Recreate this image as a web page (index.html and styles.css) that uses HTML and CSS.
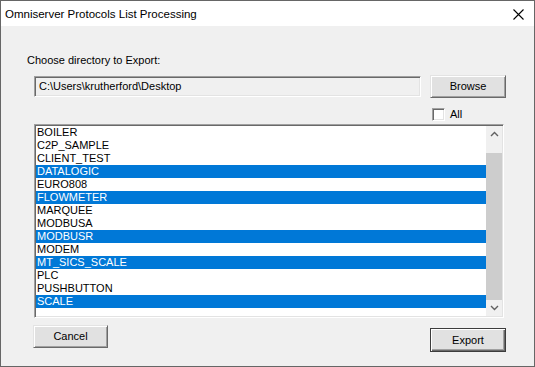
FILE: index.html
```html
<!DOCTYPE html>
<html>
<head>
<meta charset="utf-8">
<link rel="stylesheet" href="styles.css">
</head>
<body>
<div class="window">
  <div class="titlebar">
    <span class="title">Omniserver Protocols List Processing</span>
    <svg class="close" width="11" height="11" viewBox="0 0 11 11"><path d="M0.5 0.5 L10.5 10.5 M10.5 0.5 L0.5 10.5" stroke="#000" stroke-width="1.1" fill="none"/></svg>
  </div>
  <div class="main">
    <div class="label">Choose directory to Export:</div>
    <div class="row1">
      <div class="textbox">C:\Users\krutherford\Desktop</div>
      <div class="btn browse">Browse</div>
    </div>
    <div class="row2">
      <span class="checkbox"></span><span class="chklabel">All</span>
    </div>
    <div class="listbox">
      <div class="items">
        <div class="item">BOILER</div>
        <div class="item">C2P_SAMPLE</div>
        <div class="item">CLIENT_TEST</div>
        <div class="item sel">DATALOGIC</div>
        <div class="item">EURO808</div>
        <div class="item sel">FLOWMETER</div>
        <div class="item">MARQUEE</div>
        <div class="item">MODBUSA</div>
        <div class="item sel">MODBUSR</div>
        <div class="item">MODEM</div>
        <div class="item sel">MT_SICS_SCALE</div>
        <div class="item">PLC</div>
        <div class="item">PUSHBUTTON</div>
        <div class="item sel">SCALE</div>
      </div>
      <div class="scrollbar">
        <div class="arrow"><svg width="9" height="6" viewBox="0 0 9 6"><path d="M1 5 L4.5 1.5 L8 5" stroke="#606060" stroke-width="1.4" fill="none"/></svg></div>
        <div class="track"><div class="thumb"></div></div>
        <div class="arrow"><svg width="9" height="6" viewBox="0 0 9 6"><path d="M1 1 L4.5 4.5 L8 1" stroke="#606060" stroke-width="1.4" fill="none"/></svg></div>
      </div>
    </div>
    <div class="row3">
      <div class="btn cancel">Cancel</div>
      <div class="btn export">Export</div>
    </div>
  </div>
</div>
</body>
</html>
```
FILE: styles.css
```css
html, body {
  margin: 0;
  padding: 0;
  background: #f0f0f0;
}
.window {
  width: 535px;
  height: 367px;
  box-sizing: border-box;
  border: 1px solid #666666;
  background: #f0f0f0;
  font-family: "Liberation Sans", Arial, sans-serif;
  font-size: 11px;
  color: #000;
  overflow: hidden;
}
.titlebar {
  height: 25px;
  background: #ffffff;
  display: flex;
  align-items: center;
  justify-content: space-between;
  padding: 0 10px 0 4px;
}
.title {
  font-size: 11.5px;
  line-height: 16px;
  margin-top: 1px;
}
.close {
  display: block;
  margin-top: 1px;
}
.main {
  padding-left: 33px;
}
.label {
  margin-left: -7px;
  margin-top: 28px;
  height: 13px;
  line-height: 13px;
}
.row1 {
  display: flex;
  align-items: flex-start;
  margin-top: 8px;
}
.textbox {
  margin-top: 1px;
  width: 387px;
  height: 21px;
  box-sizing: border-box;
  border: 1px solid;
  border-color: #a0a0a0 #ffffff #ffffff #a0a0a0;
  box-shadow: inset 1px 1px 0 #696969, inset -1px -1px 0 #e3e3e3;
  padding: 3px 0 0 4px;
  line-height: 13px;
}
.btn {
  box-sizing: border-box;
  height: 23px;
  width: 76px;
  background: #e1e1e1;
  border: 1px solid;
  border-color: #e3e3e3 #696969 #696969 #e3e3e3;
  box-shadow: inset 1px 1px 0 #ffffff, inset -1px -1px 0 #a0a0a0;
  display: flex;
  align-items: center;
  justify-content: center;
  line-height: 13px;
}
.browse {
  margin-left: 9px;
}
.row2 {
  display: flex;
  align-items: center;
  margin-top: 10px;
  margin-left: 398px;
  height: 13px;
}
.checkbox {
  width: 13px;
  height: 13px;
  box-sizing: border-box;
  background: #ffffff;
  border: 1px solid;
  border-color: #a0a0a0 #ffffff #ffffff #a0a0a0;
  box-shadow: inset 1px 1px 0 #696969, inset -1px -1px 0 #e3e3e3;
}
.chklabel {
  margin-left: 5px;
  line-height: 13px;
}
.listbox {
  margin-top: 3px;
  width: 470px;
  height: 194px;
  box-sizing: border-box;
  border: 1px solid;
  border-color: #a0a0a0 #ffffff #ffffff #a0a0a0;
  box-shadow: inset 1px 1px 0 #696969, inset -1px -1px 0 #e3e3e3;
  padding: 1px;
  background: #ffffff;
  display: flex;
}
.items {
  width: 450px;
  display: flex;
  flex-direction: column;
}
.item {
  height: 13px;
  line-height: 13px;
  padding-left: 1px;
  white-space: nowrap;
}
.item.sel {
  background: #0078d7;
  color: #ffffff;
}
.scrollbar {
  width: 16px;
  background: #f0f0f0;
  display: flex;
  flex-direction: column;
}
.arrow {
  height: 16px;
  display: flex;
  align-items: center;
  justify-content: center;
}
.track {
  flex: 1;
  padding-top: 11px;
}
.thumb {
  height: 147px;
  background: #cdcdcd;
}
.row3 {
  display: flex;
  align-items: flex-start;
  margin-top: 7px;
  margin-left: -1px;
}
.cancel {
  width: 75px;
}
.export {
  margin-left: 322px;
  margin-top: 3px;
  height: 24px;
  border-color: #3c3c3c;
  box-shadow: inset 1px 1px 0 #ffffff, inset -1px -1px 0 #696969, inset -2px -2px 0 #a0a0a0;
}
```
